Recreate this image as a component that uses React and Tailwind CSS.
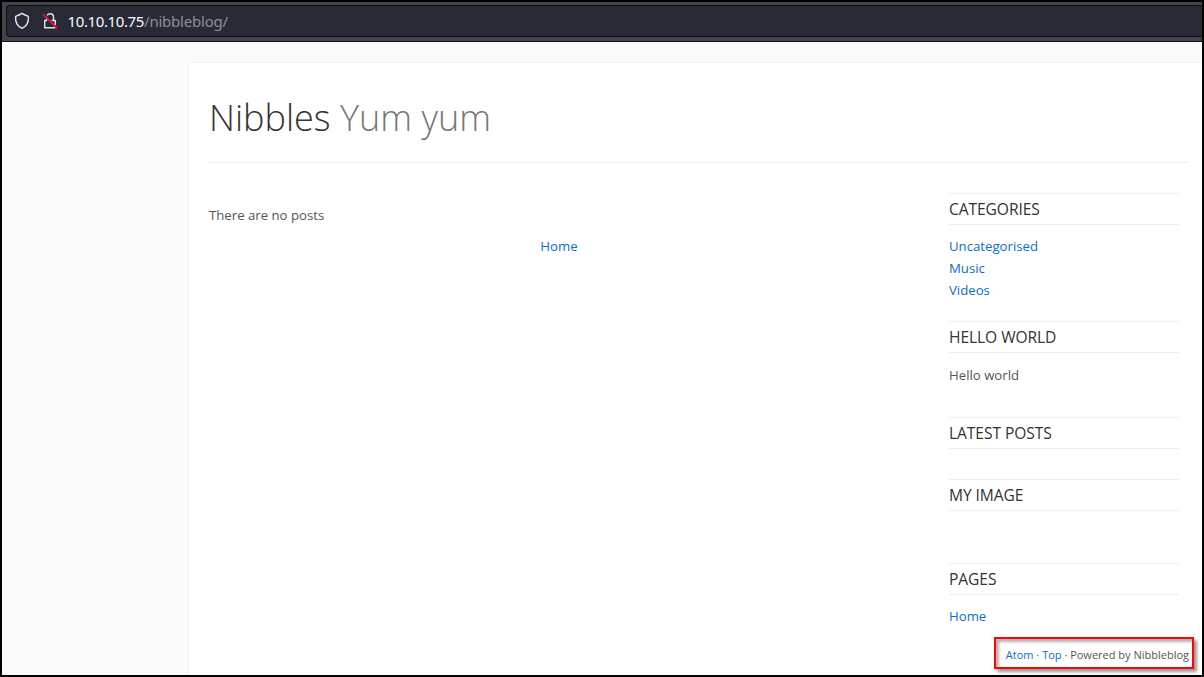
import React from "react";

function Shield() {
  return (
    <svg className="h-[18px] w-4 shrink-0" viewBox="0 0 16 18" fill="none" stroke="#e4e4ea" strokeWidth="1.4" strokeLinejoin="round">
      <path d="M8 1.3 Q10.8 3.1 14.4 4.3 C14.9 10 12.5 15 8 16.2 C3.5 15 1.1 10 1.6 4.3 Q5.2 3.1 8 1.3Z" />
    </svg>
  );
}

function InsecureLock() {
  return (
    <svg className="h-[18px] w-4 shrink-0" viewBox="0 0 16 18" fill="none" strokeWidth="1.4">
      <path d="M5.2 3.4 C5.8 2.2 6.7 1.7 8 1.7 C10.3 1.7 11.5 3.2 11.5 5.2 V8.5 M4.6 6.6 V8.5 H2.7 V15.7 H13.3 M9.6 8.5 H13.3 V13" stroke="#e4e4ea" strokeLinejoin="round" />
      <path d="M1.2 2.4 L15 16.1" stroke="#ff0842" strokeWidth="1.7" />
    </svg>
  );
}

function Widget({ title, className, children }) {
  return (
    <section className={className}>
      <h2 className="h-8 border-y border-[#eeeeee] text-[15.6px] leading-[30px] tracking-[-0.08px] whitespace-nowrap text-[#333333] uppercase">{title}</h2>
      {children}
    </section>
  );
}

const link = "text-[#0a6ecb]";

export default function App() {
  return (
    <div className="flex h-[677px] w-[1204px] flex-col overflow-hidden border-2 border-black bg-[#fafafa] font-['Open_Sans',sans-serif] text-[13.2px] text-[#555555]">
      <header className="h-10 shrink-0 border-b border-[#0c0d12] bg-[#42434c] pt-[3px] pl-1">
        <div className="flex h-8 items-center rounded-l-[4px] border border-r-0 border-[#0c0d12] bg-[#282a36] pl-[7px]">
          <Shield />
          <span className="w-3" />
          <InsecureLock />
          <span className="ml-[9.5px] font-['Noto_Sans',sans-serif] text-[15px] leading-[30px] tracking-[-0.22px] whitespace-nowrap text-[#8e8f97]">
            <span className="tracking-[-0.38px] text-[#fbfbfe]">10.10.10.75</span>/nibbleblog/
          </span>
        </div>
      </header>
      <div className="mt-5 ml-[186px] flex flex-1 flex-col border-t border-l border-[#f3f3f3] bg-white pl-5">
        <div className="mr-[14px] h-[100px] border-b border-[#eeeeee] pt-[29px]">
          <h1 className="text-[36px] leading-[52px] font-light whitespace-nowrap text-[#333333]">
            Nibbles <span className="text-[#777777]">Yum yum</span>
          </h1>
        </div>
        <div className="flex">
          <main className="w-[700px] pt-[41px] leading-[22px]">
            <p>There are no posts</p>
            <div className="mt-[9px] text-center"><a className={link}>Home</a></div>
          </main>
          <aside className="ml-10 w-[230px] pt-[30px] leading-[22px]">
            <Widget title="Categories" className="h-32">
              <ul className={`pt-[10px] ${link}`}>
                <li>Uncategorised</li>
                <li>Music</li>
                <li>Videos</li>
              </ul>
            </Widget>
            <Widget title="Hello world" className="h-24"><p className="pt-[11px]">Hello world</p></Widget>
            <Widget title="Latest posts" className="h-[62px]" />
            <Widget title="My image" className="h-[84px]" />
            <Widget title="Pages" className="h-[74px]"><p className={`pt-[10px] ${link}`}>Home</p></Widget>
          </aside>
        </div>
        <footer className="mr-[8px] flex h-8 w-[200px] items-center justify-end self-end border-2 border-[#fa0505] pt-[5px] pr-[3px] text-[11px] whitespace-pre shadow-[3px_3px_3px_rgba(0,0,0,0.4),inset_3px_3px_3px_rgba(0,0,0,0.3)]">
          <a className={link}>Atom</a> · <a className={link}>Top</a> · Powered by Nibbleblog
        </footer>
      </div>
    </div>
  );
}
